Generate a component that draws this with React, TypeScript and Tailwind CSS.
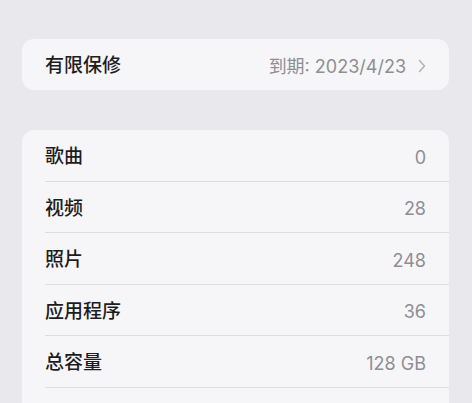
const rows = [
  { label: "歌曲", value: "0" },
  { label: "视频", value: "28" },
  { label: "照片", value: "248" },
  { label: "应用程序", value: "36" },
  { label: "总容量", value: "128 GB" },
];

const font = { fontFamily: '"Inter", "Noto Sans CJK SC", sans-serif' };

export default function App() {
  return (
    <div
      className="w-[472px] h-[403px] overflow-hidden bg-[#e9e8ed] pt-[39px] pl-[22px] pr-[23px]"
      style={font}
    >
      <div className="h-[51px] rounded-[12px] bg-[#f6f6f8] flex items-center justify-between pl-[23px] pr-[23px] pt-[3px]">
        <span className="text-[19px] font-medium text-[#1d1d1f]">有限保修</span>
        <div className="flex items-center gap-[12px] text-[#8e8e93]">
          <span className="text-[18px]">到期: 2023/4/23</span>
          <svg width="8" height="14" viewBox="0 0 8 14" fill="none">
            <path d="M1.5 1.5 L6.5 7 L1.5 12.5" stroke="#b3b3b8" strokeWidth="1.6" strokeLinecap="round" strokeLinejoin="round" />
          </svg>
        </div>
      </div>

      <div className="mt-[40px] rounded-t-[12px] bg-[#f6f6f8] pl-[23px] pb-[40px]">
        {rows.map((r) => (
          <div
            key={r.label}
            className="h-[51.5px] flex items-center justify-between pr-[23px] pt-[4px] border-b border-[#dddde1]"
          >
            <span className="text-[19px] font-medium text-[#1d1d1f]">{r.label}</span>
            <span className="text-[18px] text-[#8e8e93]">{r.value}</span>
          </div>
        ))}
      </div>
    </div>
  );
}
